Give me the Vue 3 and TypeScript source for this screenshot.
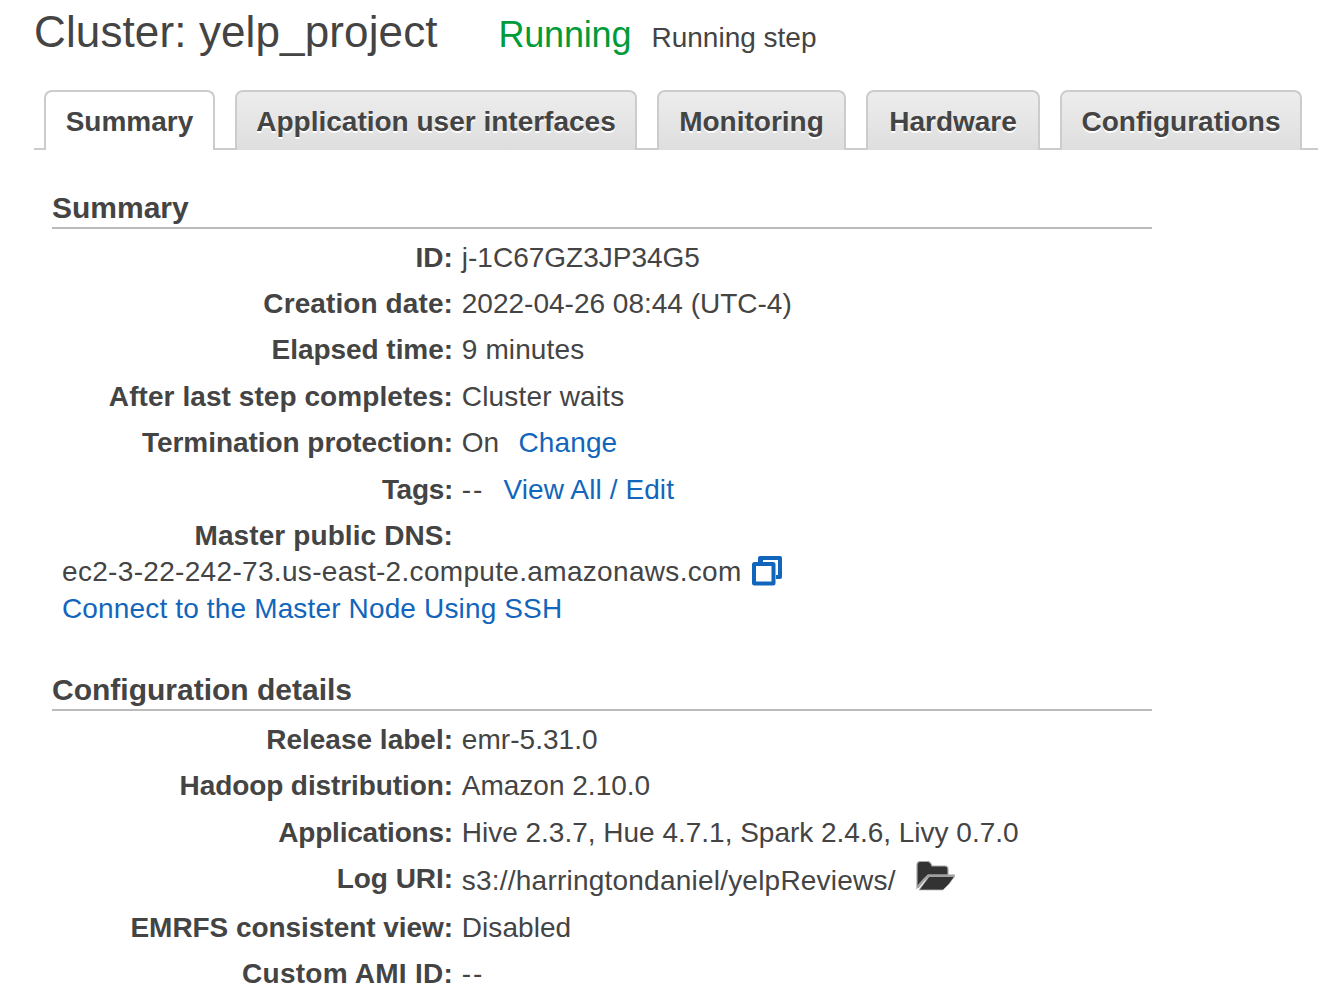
<script setup lang="ts">
interface Tab {
  label: string
  width: number
  active?: boolean
}

interface Row {
  label: string
  value?: string
  link?: string
  linkGap?: number
  folder?: boolean
  labelTracking?: number
  tracking?: number
}

const tabs: Tab[] = [
  { label: 'Summary', width: 171, active: true },
  { label: 'Application user interfaces', width: 402 },
  { label: 'Monitoring', width: 189 },
  { label: 'Hardware', width: 174 },
  { label: 'Configurations', width: 242 },
]

const summaryRows: Row[] = [
  { label: 'ID:', value: 'j-1C67GZ3JP34G5', labelTracking: 0.1 },
  { label: 'Creation date:', value: '2022-04-26 08:44 (UTC-4)', labelTracking: 0.1 },
  { label: 'Elapsed time:', value: '9 minutes', labelTracking: -0.05, tracking: 0.12 },
  { label: 'After last step completes:', value: 'Cluster waits', labelTracking: 0.07, tracking: 0.18 },
  { label: 'Termination protection:', value: 'On', link: 'Change', linkGap: 19.4, labelTracking: -0.05 },
  { label: 'Tags:', value: '--', link: 'View All / Edit', linkGap: 19.4, labelTracking: -0.3, tracking: 1.8 },
  { label: 'Master public DNS:', labelTracking: 0.1 },
]

const configRows: Row[] = [
  { label: 'Release label:', value: 'emr-5.31.0', labelTracking: 0, tracking: 0.05 },
  { label: 'Hadoop distribution:', value: 'Amazon 2.10.0', labelTracking: -0.09, tracking: 0 },
  { label: 'Applications:', value: 'Hive 2.3.7, Hue 4.7.1, Spark 2.4.6, Livy 0.7.0', labelTracking: -0.2, tracking: -0.01 },
  { label: 'Log URI:', value: 's3://harringtondaniel/yelpReviews/', folder: true, labelTracking: -0.05, tracking: 0.22 },
  { label: 'EMRFS consistent view:', value: 'Disabled', labelTracking: -0.05, tracking: 0.05 },
  { label: 'Custom AMI ID:', value: '--', labelTracking: 0.25, tracking: 1.8 },
]

const spacing = (n?: number) => ({ letterSpacing: `${n ?? 0}px` })
</script>

<template>
  <main class="page">
    <header class="header">
      <h1 class="title">Cluster: yelp_project</h1>
      <span class="state">Running</span>
      <span class="detail">Running step</span>
    </header>

    <nav class="tabs">
      <a
        v-for="tab in tabs"
        :key="tab.label"
        class="tab"
        :class="{ active: tab.active }"
        :style="{ width: `${tab.width}px` }"
      >{{ tab.label }}</a>
    </nav>

    <section class="section">
      <h2 class="heading">Summary</h2>
      <div v-for="row in summaryRows" :key="row.label" class="row">
        <span class="label" :style="spacing(row.labelTracking)">{{ row.label }}</span>
        <span v-if="row.value" class="value" :style="spacing(row.tracking)">{{ row.value }}</span>
        <a v-if="row.link" class="link action" :style="{ marginLeft: `${row.linkGap}px` }">{{ row.link }}</a>
      </div>
      <div class="dns">
        <div class="dns-line">
          <span class="host">ec2-3-22-242-73.us-east-2.compute.amazonaws.com</span>
          <svg class="copy" width="30" height="30" viewBox="0 0 30 30">
            <path d="M8 0h20q2 0 2 2v19q0 2-2 2h-4v-4h2V4H11v3H6V2q0-2 2-2z" fill="#1166bb" />
            <rect x="2" y="8" width="19.5" height="19.5" rx="0.5" fill="#fff" stroke="#1166bb" stroke-width="4" />
          </svg>
        </div>
        <a class="link ssh">Connect to the Master Node Using SSH</a>
      </div>
    </section>

    <section class="section config">
      <h2 class="heading">Configuration details</h2>
      <div v-for="row in configRows" :key="row.label" class="row" :class="{ 'with-icon': row.folder }">
        <span class="label" :style="spacing(row.labelTracking)">{{ row.label }}</span>
        <span class="value" :style="spacing(row.tracking)">{{ row.value }}</span>
        <svg v-if="row.folder" class="folder" width="40" height="30" viewBox="0 0 40 30">
          <path d="M1 27V4Q1 .5 4.500 .5h7q3 0 4.500 4.500H29q3 0 3 3v6H12L4 23z" fill="#333" stroke="#aaa" stroke-width="1.200" />
          <path d="M3 29L13 15.500h25.500Q34 23 27 29z" fill="#333" stroke="#bbb" stroke-width="0.800" />
          <path d="M1.500 26.500Q8 18 12.500 14.800H38.800" fill="none" stroke="#a0a0a0" stroke-width="2.600" stroke-linejoin="round" />
        </svg>
      </div>
    </section>
  </main>
</template>

<style>
body {
  background: #fff;
  overflow: hidden;
}
</style>

<style scoped>
.page {
  box-sizing: border-box;
  width: 1318px;
  height: 1006px;
  overflow: hidden;
  font-family: "Liberation Sans", Arial, sans-serif;
  font-size: 28px;
  line-height: 36.4px;
  color: #444;
  white-space: nowrap;
}
.header {
  box-sizing: border-box;
  display: flex;
  align-items: baseline;
  height: 90px;
  padding: 7px 0 0 34px;
}
.title {
  width: 464.5px;
  margin: 0;
  font-size: 44px;
  font-weight: 400;
  line-height: 50px;
  letter-spacing: 0.12px;
}
.state {
  width: 153px;
  font-size: 36px;
  letter-spacing: -0.2px;
  color: #009b3a;
}
.tabs {
  display: flex;
  gap: 20px;
  box-sizing: border-box;
  height: 60px;
  margin-left: 34px;
  padding-left: 10px;
  background: linear-gradient(#ccc, #ccc) 0 58px / 100% 2px no-repeat;
}
.tab {
  flex: none;
  box-sizing: border-box;
  height: 60px;
  border: 2px solid #ccc;
  border-bottom: 0;
  border-radius: 8px 8px 0 0;
  background: linear-gradient(#ededed, #dedede);
  background-clip: padding-box;
  font-weight: 700;
  line-height: 60px;
  text-align: center;
  text-shadow: 0 2px 0 #fff;
}
.tab.active {
  background: #fff;
}
.section {
  width: 1100px;
  margin: 39px 0 0 52px;
}
.heading {
  box-sizing: border-box;
  height: 40px;
  margin: 0 0 10.6px;
  border-bottom: 2px solid #bbb;
  font-size: 30px;
  line-height: 37px;
}
.row {
  display: flex;
  height: 36.4px;
  margin-bottom: 10px;
}
.label {
  width: 401px;
  margin-right: 8.8px;
  font-weight: 700;
  text-align: right;
}
.link {
  color: #1166bb;
}
.action {
  letter-spacing: 0.1px;
}
.dns {
  margin-top: -10px;
  padding-left: 10px;
}
.dns-line {
  display: flex;
  height: 36.4px;
}
.host {
  letter-spacing: 0.32px;
}
.copy {
  margin: 1.7px 0 0 10.7px;
}
.ssh {
  letter-spacing: 0.15px;
}
.config {
  margin-top: 43.8px;
}
.config .heading {
  margin-bottom: 11px;
}
.with-icon {
  height: 38.8px;
}
.with-icon .value {
  padding-top: 2px;
}
.folder {
  margin: -0.2px 0 0 20.4px;
}
</style>
